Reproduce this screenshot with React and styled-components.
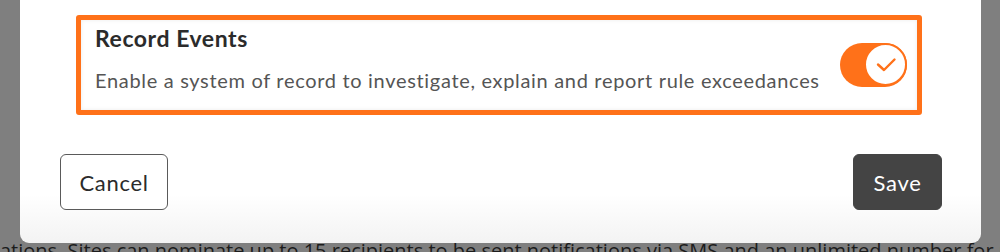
import React from 'react'
import styled, { createGlobalStyle } from 'styled-components'

const GlobalStyle = createGlobalStyle`
  html, body {
    margin: 0;
    padding: 0;
    background: #7f7f7f;
    font-family: Lato, "Noto Sans", sans-serif;
    overflow: hidden;
  }
`

const Page = styled.div`
  width: 1000px;
  height: 252px;
  display: flex;
  flex-direction: column;
  background: #7f7f7f;
  overflow: hidden;
`

const Modal = styled.div`
  position: relative;
  z-index: 1;
  flex-shrink: 0;
  margin: 0 19px 0 20px;
  height: 243px;
  box-sizing: border-box;
  background: linear-gradient(to bottom, #ffffff 0%, #ffffff 80%, #f3f3f3 100%);
  border-radius: 0 0 9px 9px;
  padding: 15px 0 0;
  display: flex;
  flex-direction: column;
`

const SettingBox = styled.div`
  margin: 0 59px 0 56px;
  height: 100px;
  box-sizing: border-box;
  border: 5px solid #ff7119;
  border-radius: 3px;
  box-shadow: inset 0 0 4px rgba(0, 0, 0, 0.08);
  padding: 0 10px 0 14px;
  display: flex;
  align-items: center;
  justify-content: space-between;
`

const TextCol = styled.div`
  display: flex;
  flex-direction: column;
  gap: 17px;
  margin-top: -13px;
`

const Title = styled.div`
  font-size: 23px;
  font-weight: 700;
  letter-spacing: 0.55px;
  color: #2b2b2b;
  line-height: 26px;
`

const Description = styled.div`
  font-size: 20px;
  letter-spacing: 0.68px;
  color: #555555;
  line-height: 24px;
`

const Toggle = styled.div`
  width: 67px;
  height: 44px;
  border-radius: 22px;
  background: #ff7119;
  display: flex;
  align-items: center;
  justify-content: flex-end;
  box-sizing: border-box;
  margin-top: -1px;
`

const Knob = styled.div`
  width: 43px;
  height: 43px;
  border-radius: 50%;
  background: #ffffff;
  border: 2px solid #ff7119;
  box-sizing: border-box;
  display: flex;
  align-items: center;
  justify-content: center;
`

const Actions = styled.div`
  margin: 39px 39px 0 40px;
  display: flex;
  justify-content: space-between;
`

const Button = styled.button`
  height: 56px;
  padding: 0 16px;
  min-width: ${p => (p.$primary ? '89px' : '108px')};
  border-radius: 6px;
  font-family: Lato, "Noto Sans", sans-serif;
  font-size: 22px;
  letter-spacing: 0.7px;
  cursor: pointer;
  border: 1px solid ${p => (p.$primary ? '#444444' : '#5a5a5a')};
  background: ${p => (p.$primary ? '#444444' : '#ffffff')};
  color: ${p => (p.$primary ? '#ffffff' : '#2b2b2b')};
`

const BackText = styled.div`
  margin-top: -4px;
  font-size: 20px;
  line-height: 24px;
  color: #1c1c1c;
  white-space: nowrap;
  font-family: "Open Sans", "Noto Sans", sans-serif;
`

export default function App() {
  return (
    <Page>
      <GlobalStyle />
      <Modal>
        <SettingBox>
          <TextCol>
            <Title>Record Events</Title>
            <Description>
              Enable a system of record to investigate, explain and report rule exceedances
            </Description>
          </TextCol>
          <Toggle>
            <Knob>
              <svg width="24" height="24" viewBox="0 0 24 24" fill="none">
                <path
                  d="M4 11.5 L10 17 L20.5 6.5"
                  stroke="#ff7119"
                  strokeWidth="2.4"
                  strokeLinecap="round"
                  strokeLinejoin="round"
                />
              </svg>
            </Knob>
          </Toggle>
        </SettingBox>
        <Actions>
          <Button>Cancel</Button>
          <Button $primary>Save</Button>
        </Actions>
      </Modal>
      <BackText>
        ations. Sites can nominate up to 15 recipients to be sent notifications via SMS and an unlimited number for recipients
      </BackText>
    </Page>
  )
}
